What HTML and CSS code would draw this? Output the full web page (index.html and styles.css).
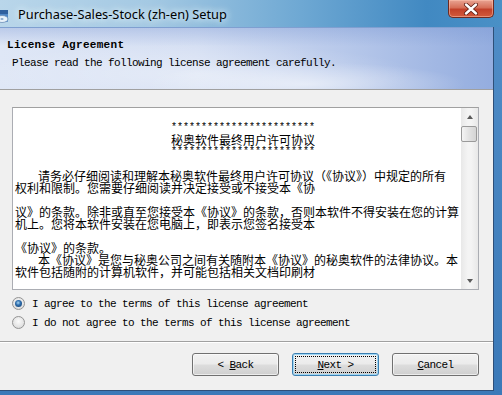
FILE: index.html
```html
<!DOCTYPE html>
<html lang="en">

<head>
    <meta charset="UTF-8">
    <meta name="viewport" content="width=device-width, initial-scale=1.0">
    <title>Purchase-Sales-Stock (zh-en) Setup</title>
    <link rel="stylesheet" href="styles.css">
</head>

<body>
    <div class="window">
        <!-- 标题栏 -->
        <div class="titlebar">
            <svg class="app_icon" width="10" height="16" viewBox="0 0 10 16">
                <rect x="-4" y="2" width="12" height="12" rx="1" fill="#4f86c6" />
                <ellipse cx="2" cy="11" rx="6" ry="3.5" fill="#e8f1fa" stroke="#6d8fb8" stroke-width="0.8" />
                <ellipse cx="2" cy="11" rx="1.6" ry="1" fill="#8aa8cc" />
                <rect x="-4" y="2" width="12" height="4" fill="#2f5f9e" />
            </svg>
            <span class="title">Purchase-Sales-Stock (zh-en) Setup</span>
            <div class="close">
                <svg width="16" height="12" viewBox="0 0 16 12">
                    <path d="M3 1.5 L13 10.5 M13 1.5 L3 10.5" stroke="#5a1a10" stroke-width="4" stroke-linecap="round" />
                    <path d="M3 1.5 L13 10.5 M13 1.5 L3 10.5" stroke="#ffffff" stroke-width="2.4" stroke-linecap="round" />
                </svg>
            </div>
        </div>
        <div class="frame">
            <div class="client">
                <!-- 头部 -->
                <div class="header">
                    <div class="head_title">License Agreement</div>
                    <div class="head_sub">Please read the following license agreement carefully.</div>
                </div>
                <!-- 协议内容 -->
                <div class="body">
                    <div class="license">
                        <div class="license_text">
                            <div class="ln center stars">************************</div>
                            <div class="ln center">秘奥软件最终用户许可协议</div>
                            <div class="ln center stars">************************</div>
                            <div class="ln"></div>
                            <div class="ln indent">请务必仔细阅读和理解本秘奥软件最终用户许可协议（《协议》）中规定的所有</div>
                            <div class="ln">权利和限制。您需要仔细阅读并决定接受或不接受本《协</div>
                            <div class="ln"></div>
                            <div class="ln">议》的条款。除非或直至您接受本《协议》的条款，否则本软件不得安装在您的计算</div>
                            <div class="ln">机上。您将本软件安装在您电脑上，即表示您签名接受本</div>
                            <div class="ln"></div>
                            <div class="ln">《协议》的条款。</div>
                            <div class="ln indent">本《协议》是您与秘奥公司之间有关随附本《协议》的秘奥软件的法律协议。本</div>
                            <div class="ln">软件包括随附的计算机软件，并可能包括相关文档印刷材</div>
                        </div>
                        <div class="scrollbar">
                            <div class="sb_btn"><span class="arrow up"></span></div>
                            <div class="sb_thumb"></div>
                            <div class="sb_track"></div>
                            <div class="sb_btn"><span class="arrow down"></span></div>
                        </div>
                    </div>
                    <div class="choices">
                        <label class="choice"><span class="radio on"></span>I agree to the terms of this license agreement</label>
                        <label class="choice"><span class="radio"></span>I do not agree to the terms of this license agreement</label>
                    </div>
                </div>
                <!-- 按钮 -->
                <div class="footer">
                    <button class="btn"><span>&lt; <u>B</u>ack</span></button>
                    <button class="btn focus"><span class="focus_rect"><span><u>N</u>ext &gt;</span></span></button>
                    <button class="btn"><span><u>C</u>ancel</span></button>
                </div>
            </div>
        </div>
    </div>
</body>

</html>
```

FILE: styles.css
```css
* {
    margin: 0;
    padding: 0;
    box-sizing: border-box;
}

body {
    width: 502px;
    height: 395px;
    overflow: hidden;
    background: #4f8cc6;
}

.window {
    width: 502px;
    height: 395px;
    display: flex;
    flex-direction: column;
    background: linear-gradient(90deg, #a9cbe4 0%, #8fbcdc 35%, #5d9bcb 65%, #3f86c0 100%);
}

/* 标题栏 */

.titlebar {
    height: 27px;
    display: flex;
    align-items: center;
    background: linear-gradient(90deg, #b9d6ea 0%, #a4c9e3 30%, #6ea8d3 60%, #4189c2 85%, #4a90c6 100%);
}

.app_icon {
    flex: none;
    margin-top: 4px;
}

.title {
    margin-left: 8px;
    font-family: "Noto Sans", sans-serif;
    font-size: 12.8px;
    color: #000;
    text-shadow: 0 0 6px #e6f3fb, 0 0 10px #e6f3fb;
}

.close {
    align-self: flex-start;
    margin-left: auto;
    margin-right: 8px;
    width: 46px;
    height: 18px;
    display: flex;
    align-items: center;
    justify-content: center;
    border: 1px solid #6e2a22;
    border-top: none;
    border-radius: 0 0 5px 5px;
    background: linear-gradient(#e9a493 0%, #d66f58 45%, #c2412a 55%, #d25a3c 100%);
    box-shadow: inset 0 0 0 1px rgba(255, 200, 180, 0.5);
}

/* 窗口边框 */

.frame {
    flex: 1;
    display: flex;
    padding: 0 8px 4px 0;
    background: linear-gradient(#4f8cc6, #3b79b8);
}

.client {
    flex: 1;
    display: flex;
    flex-direction: column;
    background: #f0f0f0;
    border-right: 1px solid #2e4f78;
    border-bottom: 1px solid #2e4f78;
}

/* 头部 */

.header {
    height: 63px;
    padding: 11px 0 0 7px;
    border-top: 1px solid #7f9fd0;
    border-bottom: 1px solid #a0a0a0;
    background:
        radial-gradient(ellipse 160px 22px at 62% 92%, rgba(255, 255, 255, 0.55), rgba(255, 255, 255, 0) 100%),
        radial-gradient(ellipse 220px 30px at 40% 75%, rgba(255, 255, 255, 0.35), rgba(255, 255, 255, 0) 100%),
        linear-gradient(180deg, rgba(120, 150, 210, 0.35) 0%, rgba(255, 255, 255, 0) 30%),
        linear-gradient(90deg, #dfe7f6 0%, #d5dff3 40%, #b7c8ea 70%, #94addf 100%);
}

.head_title {
    font-family: "Liberation Mono", monospace;
    font-size: 11px;
    font-weight: bold;
    letter-spacing: 0.3px;
    line-height: 13px;
    color: #000;
}

.head_sub {
    margin: 5px 0 0 5px;
    font-family: "Liberation Mono", monospace;
    font-size: 11px;
    letter-spacing: -0.6px;
    line-height: 13px;
    color: #000;
}

/* 协议内容 */

.body {
    padding: 0 14px 0 12px;
}

.license {
    margin-top: 17px;
    height: 183px;
    display: flex;
    background: #fff;
    border: 1px solid #abadb3;
    border-top-color: #a0a0a0;
    overflow: hidden;
}

.license_text {
    flex: 1;
    padding: 14px 0 0 2px;
    font-family: "Noto Sans CJK SC", sans-serif;
    font-size: 12px;
    line-height: 12px;
    color: #000;
    white-space: nowrap;
    overflow: hidden;
}

.ln {
    height: 12px;
}

.center {
    padding-left: 156px;
}

.stars {
    font-family: "Liberation Mono", monospace;
    font-size: 10px;
    line-height: 12px;
}

.indent {
    padding-left: 23px;
}

.scrollbar {
    width: 17px;
    display: flex;
    flex-direction: column;
    background: linear-gradient(90deg, #e8e8e8, #f4f4f4 40%, #f4f4f4 60%, #e8e8e8);
}

.sb_btn {
    height: 17px;
    display: flex;
    align-items: center;
    justify-content: center;
}

.arrow {
    width: 0;
    height: 0;
    border-left: 3px solid transparent;
    border-right: 3px solid transparent;
}

.arrow.up {
    border-bottom: 4px solid #5a5a5a;
}

.arrow.down {
    border-top: 4px solid #5a5a5a;
}

.sb_thumb {
    height: 16px;
    margin: 1px 0 0 0;
    width: 16px;
    border: 1px solid #9a9a9a;
    border-radius: 2px;
    background: linear-gradient(90deg, #f4f4f4, #e2e2e2 50%, #d4d4d4);
}

.sb_track {
    flex: 1;
}

.choices {
    margin-top: 4px;
}

.choice {
    height: 19px;
    display: flex;
    align-items: center;
    font-family: "Liberation Mono", monospace;
    font-size: 11px;
    letter-spacing: -0.6px;
    color: #000;
}

.radio {
    flex: none;
    width: 13px;
    height: 13px;
    margin-right: 7px;
    display: flex;
    align-items: center;
    justify-content: center;
    border: 1px solid #939393;
    border-radius: 50%;
    background: radial-gradient(circle at 50% 40%, #fbfbfb 0%, #e4e4e4 60%, #cfcfcf 100%);
}

.radio.on::after {
    content: "";
    width: 7px;
    height: 7px;
    border-radius: 50%;
    background: radial-gradient(circle at 45% 40%, #a9d6f4 0%, #2f6fae 40%, #123866 100%);
}

/* 按钮 */

.footer {
    flex: 1;
    display: flex;
    justify-content: flex-end;
    align-items: flex-start;
    gap: 13px;
    margin-top: 9px;
    padding: 11px 14px 0 0;
    border-top: 1px solid #a0a0a0;
    box-shadow: inset 0 1px 0 #ffffff;
}

.btn {
    width: 87px;
    height: 23px;
    display: flex;
    align-items: center;
    justify-content: center;
    border: 1px solid #707070;
    border-radius: 3px;
    background: linear-gradient(#f2f2f2 0%, #ebebeb 48%, #dddddd 52%, #cfcfcf 100%);
    box-shadow: inset 0 0 0 1px rgba(255, 255, 255, 0.6);
    font-family: "Liberation Mono", monospace;
    font-size: 11px;
    letter-spacing: -0.6px;
    color: #000;
    white-space: pre;
}

.btn.focus {
    border-color: #3c7fb1;
    box-shadow: inset 0 0 0 1px #9fd7f5;
    padding: 2px;
}

.focus_rect {
    width: 100%;
    height: 100%;
    display: flex;
    align-items: center;
    justify-content: center;
    border: 1px dotted #000;
}

u {
    text-decoration: underline;
}
```
